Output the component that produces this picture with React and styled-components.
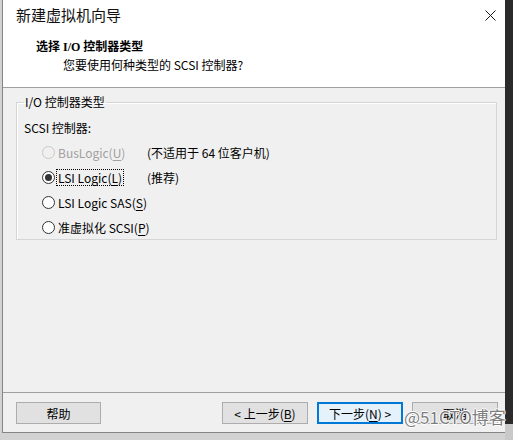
import React from "react";
import styled, { createGlobalStyle } from "styled-components";

const GlobalStyle = createGlobalStyle`
	html, body {
		margin: 0;
		width: 513px;
		height: 440px;
		overflow: hidden;
		background: #d4d4d4;
	}
	* {
		box-sizing: border-box;
	}
`;

const FONT = `"Noto Sans CJK SC", "Noto Sans", sans-serif`;

const controllers = [
	{ label: "BusLogic", key: "U", note: "(不适用于 64 位客户机)", disabled: true },
	{ label: "LSI Logic", key: "L", note: "(推荐)", checked: true, focused: true },
	{ label: "LSI Logic SAS", key: "S" },
	{ label: "准虚拟化 SCSI", key: "P" },
];

export default function App() {
	return (
		<>
			<GlobalStyle />
			<Screen>
				<Window>
					<Header>
						<TitleRow>
							<Title>新建虚拟机向导</Title>
							<svg width="11" height="11" viewBox="0 0 11 11">
								<path d="M0.5 0.5 L10.5 10.5 M10.5 0.5 L0.5 10.5" stroke="#1a1a1a" strokeWidth="1" />
							</svg>
						</TitleRow>
						<Heading>选择 I/O 控制器类型</Heading>
						<Subtitle>您要使用何种类型的 SCSI 控制器?</Subtitle>
					</Header>
					<Body>
						<Group>
							<Legend>I/O 控制器类型</Legend>
							<GroupLabel>SCSI 控制器:</GroupLabel>
							<Options>
								{controllers.map((c) => (
									<Option key={c.key}>
										<Choice $disabled={c.disabled}>
											<Radio $checked={c.checked} $disabled={c.disabled} />
											<ChoiceText $focused={c.focused}>
												{c.label}(<u>{c.key}</u>)
											</ChoiceText>
										</Choice>
										{c.note && <Note>{c.note}</Note>}
									</Option>
								))}
							</Options>
						</Group>
					</Body>
					<Footer>
						<Button $narrow>帮助</Button>
						<Spacer />
						<Button>
							&lt; 上一步(<u>B</u>)
						</Button>
						<Button $primary>
							下一步(<u>N</u>) &gt;
						</Button>
						<Button>取消</Button>
					</Footer>
				</Window>
				<RightEdge />
				<Watermark>@51CTO博客</Watermark>
			</Screen>
		</>
	);
}

const Screen = styled.div`
	position: relative;
	display: flex;
	width: 513px;
	height: 440px;
	padding-left: 2px;
	background: #d2d2d2;
	font-family: ${FONT};
	color: #000;
`;

const Window = styled.div`
	display: flex;
	flex-direction: column;
	width: 503px;
	height: 433px;
	background: #f0f0f0;
	border-left: 1px solid #858585;
	border-bottom: 1px solid #858585;
`;

const RightEdge = styled.div`
	flex: 1;
	background: linear-gradient(#2b2b2b 0 424px, #c9c9c9 424px);
`;

const Header = styled.div`
	height: 88px;
	background: #fff;
	border-bottom: 1px solid #a0a0a0;
`;

const TitleRow = styled.div`
	display: flex;
	align-items: center;
	justify-content: space-between;
	height: 30px;
	padding: 0 9px 0 13px;
`;

const Title = styled.div`
	font-size: 15px;
	line-height: 20px;
	color: #111;
`;

const Heading = styled.div`
	margin-top: 9px;
	padding-left: 33px;
	font-family: "Liberation Serif", "Noto Sans CJK SC", serif;
	font-size: 12px;
	font-weight: bold;
	line-height: 16px;
`;

const Subtitle = styled.div`
	margin-top: 2px;
	padding-left: 60px;
	font-size: 12px;
	line-height: 16px;
`;

const Body = styled.div`
	flex: 1;
	padding: 6px 8px 0 13px;
`;

const Group = styled.fieldset`
	margin: 0;
	height: 146px;
	padding: 0 0 0 7px;
	border: 1px solid #d5d5d5;
	box-shadow: inset 1px 1px 0 #fff;
	min-width: 0;
`;

const Legend = styled.legend`
	padding: 0 1px;
	font-size: 12px;
	line-height: 16px;
`;

const GroupLabel = styled.div`
	margin-top: 10px;
	font-size: 12px;
	line-height: 16px;
`;

const Options = styled.div`
	display: grid;
	grid-auto-rows: 25px;
	margin-top: 4px;
	padding-left: 18px;
`;

const Option = styled.div`
	display: grid;
	grid-template-columns: 105px auto;
	align-items: center;
	font-size: 12px;
	white-space: nowrap;
`;

const Choice = styled.div`
	display: flex;
	align-items: center;
	gap: 2px;
	color: ${(p) => (p.$disabled ? "#a0a0a0" : "#000")};
`;

const Radio = styled.span`
	position: relative;
	flex: none;
	width: 13px;
	height: 13px;
	border-radius: 50%;
	border: 1px solid ${(p) => (p.$disabled ? "#c8c8c8" : "#333")};
	background: ${(p) => (p.$disabled ? "#f0f0f0" : "#fff")};
	&::after {
		content: "";
		display: ${(p) => (p.$checked ? "block" : "none")};
		position: absolute;
		left: 2px;
		top: 2px;
		width: 7px;
		height: 7px;
		border-radius: 50%;
		background: #333;
	}
`;

const ChoiceText = styled.span`
	line-height: 15px;
	padding: 0 1px;
	outline: ${(p) => (p.$focused ? "1px dotted #000" : "none")};
	u {
		text-underline-offset: 2px;
	}
`;

const Note = styled.span`
	line-height: 16px;
`;

const Footer = styled.div`
	display: flex;
	gap: 9px;
	height: 40px;
	padding: 9px 7px 0 13px;
	border-top: 1px solid #a0a0a0;
`;

const Spacer = styled.div`
	flex: 1;
`;

const Button = styled.div`
	display: flex;
	align-items: center;
	justify-content: center;
	width: ${(p) => (p.$narrow ? "85px" : "86px")};
	height: 22px;
	font-size: 12px;
	background: ${(p) => (p.$primary ? "#e5f1fb" : "#e1e1e1")};
	border: 1px solid ${(p) => (p.$primary ? "#0078d7" : "#adadad")};
	box-shadow: ${(p) => (p.$primary ? "inset 0 0 0 1px #0078d7" : "none")};
	u {
		text-underline-offset: 2px;
	}
`;

const Watermark = styled.div`
	position: absolute;
	left: 404px;
	top: 406px;
	font-size: 17px;
	line-height: 22px;
	color: #7e7e7e;
	text-shadow: 1px 0 0 #fff, -1px 0 0 #fff, 0 1px 0 #fff, 0 -1px 0 #fff;
	white-space: nowrap;
`;
